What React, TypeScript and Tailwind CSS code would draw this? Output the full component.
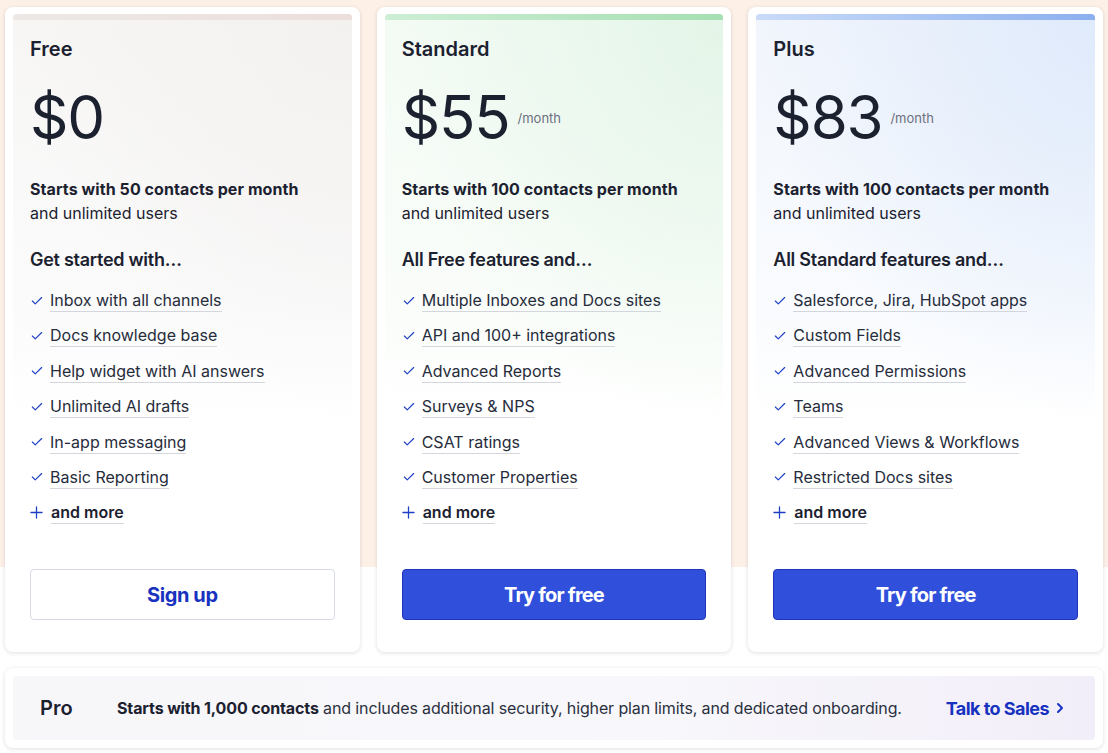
import { Check, Plus, ChevronRight } from "lucide-react";

const plans = [
  {
    name: "Free",
    price: "$0",
    perMonth: false,
    contacts: "Starts with 50 contacts per month",
    heading: "Get started with…",
    bar: "bg-[linear-gradient(to_right,#ece8e6,#ecdfdb)]",
    panel:
      "bg-[radial-gradient(ellipse_at_top_right,#f3f1f0_0%,rgba(255,255,255,0)_70%),linear-gradient(to_bottom,#f7f6f5,#fbfbfb_70%,#ffffff)]",
    features: [
      "Inbox with all channels",
      "Docs knowledge base",
      "Help widget with AI answers",
      "Unlimited AI drafts",
      "In-app messaging",
      "Basic Reporting",
    ],
    cta: "Sign up",
    primary: false,
  },
  {
    name: "Standard",
    price: "$55",
    perMonth: true,
    contacts: "Starts with 100 contacts per month",
    heading: "All Free features and…",
    bar: "bg-[linear-gradient(to_right,#cdeed5,#a6dfb2)]",
    panel:
      "bg-[radial-gradient(ellipse_at_top_right,#e4f5e8_0%,rgba(255,255,255,0)_70%),linear-gradient(to_bottom,#f3fbf4,#fafdfa_70%,#ffffff)]",
    features: [
      "Multiple Inboxes and Docs sites",
      "API and 100+ integrations",
      "Advanced Reports",
      "Surveys & NPS",
      "CSAT ratings",
      "Customer Properties",
    ],
    cta: "Try for free",
    primary: true,
  },
  {
    name: "Plus",
    price: "$83",
    perMonth: true,
    contacts: "Starts with 100 contacts per month",
    heading: "All Standard features and…",
    bar: "bg-[linear-gradient(to_right,#c9dbf8,#8cafef)]",
    panel:
      "bg-[radial-gradient(ellipse_at_top_right,#dfeafb_0%,rgba(255,255,255,0)_70%),linear-gradient(to_bottom,#f1f5fc,#f9fbfe_70%,#ffffff)]",
    features: [
      "Salesforce, Jira, HubSpot apps",
      "Custom Fields",
      "Advanced Permissions",
      "Teams",
      "Advanced Views & Workflows",
      "Restricted Docs sites",
    ],
    cta: "Try for free",
    primary: true,
  },
];

const App = () => {
  return (
    <div
      className="min-h-[753px] w-[1108px] bg-[linear-gradient(to_bottom,#fdf0e7_567px,#ffffff_567px)] px-[5px] pt-[7px] text-[#1c2130]"
      style={{ fontFamily: "Inter, 'Noto Sans', sans-serif" }}
    >
      {/* Plan cards */}
      <div className="flex gap-[17px]">
        {plans.map((plan) => (
          <div
            key={plan.name}
            className="relative flex h-[645px] flex-1 flex-col rounded-lg bg-white px-[25px] pb-8 pt-[28px] shadow-[0_1px_4px_rgba(30,30,60,0.14)]"
          >
            {/* decorative top panel */}
            <div
              className={`absolute left-2 right-2 top-[7px] h-[409px] overflow-hidden rounded-t-[4px] ${plan.panel}`}
            >
              <div className={`h-[6px] ${plan.bar}`} />
            </div>

            <div className="relative">
              <h3 className="text-[20px] font-semibold leading-7">{plan.name}</h3>
              <div className="mt-[24px] flex h-[60px] items-center">
                <span className="text-[60px] leading-none tracking-[-0.02em]">{plan.price}</span>
                {plan.perMonth && (
                  <span className="ml-2 mt-1 text-[13px] text-[#6b7080]">/month</span>
                )}
              </div>
              <p className="mt-[30px] text-[16px] font-bold leading-6 tracking-[0.005em]">{plan.contacts}</p>
              <p className="text-[16px] leading-6">and unlimited users</p>
              <h4 className="mt-[21px] text-[18px] font-semibold leading-7 tracking-[-0.015em]">
                {plan.heading}
              </h4>
              <ul className="mt-[15px] flex flex-col gap-[12.4px]">
                {plan.features.map((f) => (
                  <li key={f} className="flex items-center text-[16px] leading-6 text-[#262c3b]">
                    <Check className="mr-[6px] h-[14px] w-[14px] text-[#1e3fc6]" strokeWidth={2} />
                    <span className="border-b border-[#d3d6dd] leading-[22px]">{f}</span>
                  </li>
                ))}
                <li className="flex items-center text-[16px] font-semibold leading-6">
                  <Plus className="-ml-[3px] mr-[5px] h-[19px] w-[19px] text-[#1e3fc6]" strokeWidth={1.6} />
                  <span className="border-b border-[#d3d6dd] leading-[22px]">and more</span>
                </li>
              </ul>
            </div>

            {plan.primary ? (
              <button className="relative mt-auto h-[51px] w-full rounded-[4px] border border-[#1f36b8] bg-[#3050dc] text-[20px] font-bold tracking-[-0.04em] text-white">
                {plan.cta}
              </button>
            ) : (
              <button className="relative mt-auto h-[51px] w-full rounded-[4px] border border-[#d6dbe6] bg-white text-[20px] font-bold tracking-[-0.02em] text-[#1832c0]">
                {plan.cta}
              </button>
            )}
          </div>
        ))}
      </div>

      {/* Pro bar */}
      <div className="mt-4 rounded-lg bg-white p-2 shadow-[0_1px_4px_rgba(30,30,60,0.14)]">
        <div className="flex h-16 items-center rounded-[4px] bg-[linear-gradient(to_right,#f7f7fa,#f8f7fb_60%,#f2eef9)] pl-[27px] pr-[27px]">
          <span className="w-[77px] text-[20px] font-semibold">Pro</span>
          <p className="flex-1 text-[16px] tracking-[-0.008em] text-[#2a3040]">
            <span className="font-bold text-[#1c2130]">Starts with 1,000 contacts</span> and
            includes additional security, higher plan limits, and dedicated onboarding.
          </p>
          <a className="flex items-center text-[18px] font-bold tracking-[-0.03em] text-[#1832c0]">
            Talk to Sales
            <ChevronRight className="ml-[3px] h-4 w-4" strokeWidth={3} />
          </a>
        </div>
      </div>
    </div>
  );
};

export default App;
